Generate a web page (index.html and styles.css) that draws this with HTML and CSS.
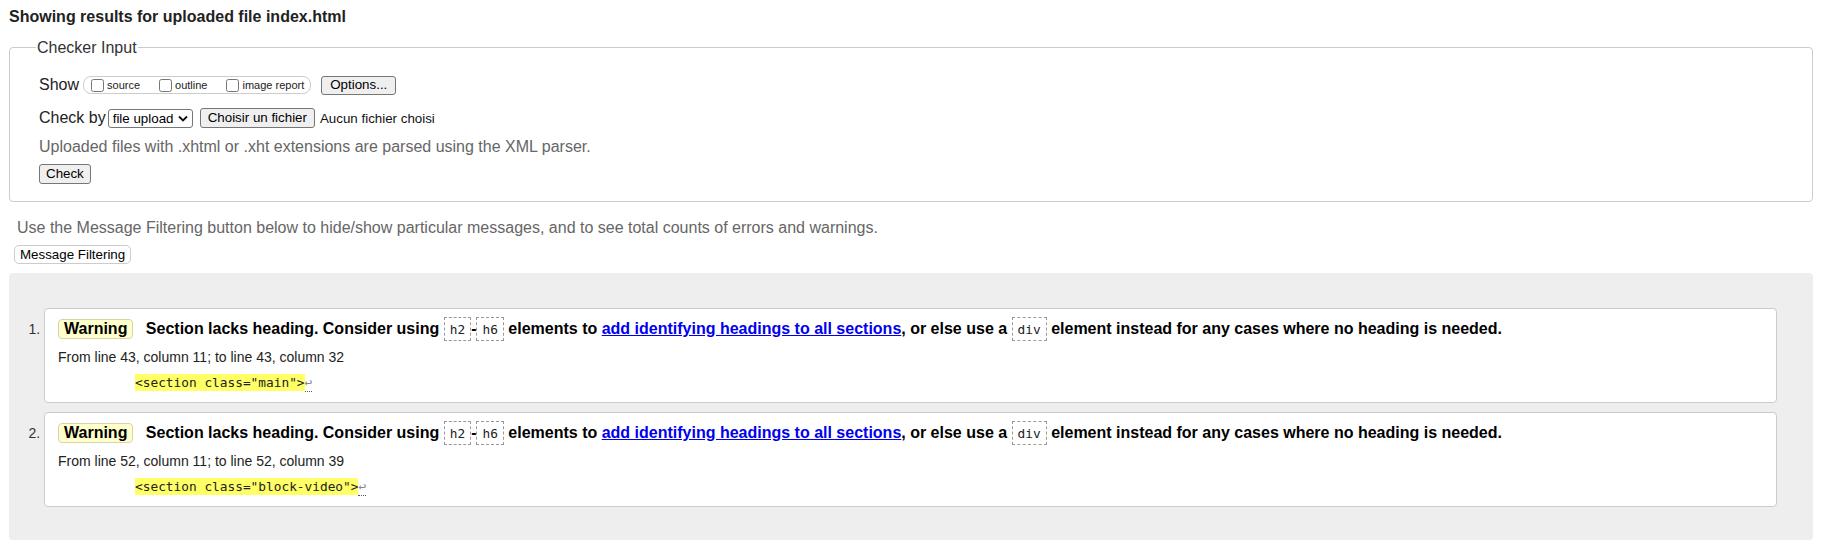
FILE: index.html
```html
<!DOCTYPE html>
<html lang="en">
<head>
<meta charset="utf-8">
<title>Showing results for uploaded file index.html - Nu Html Checker</title>
<link rel="stylesheet" href="styles.css">
</head>
<body>
<h2 class="results-title">Showing results for uploaded file index.html</h2>
<form class="checker" action="#">
  <fieldset class="checker-input">
    <legend class="checker-legend">Checker Input</legend>
    <div class="row row-show">
      <span class="row-label">Show</span>
      <span class="show-options">
        <label class="opt"><input type="checkbox" class="cb"><span>source</span></label>
        <label class="opt"><input type="checkbox" class="cb"><span>outline</span></label>
        <label class="opt"><input type="checkbox" class="cb"><span>image report</span></label>
      </span>
      <button type="button" class="btn btn-options">Options...</button>
    </div>
    <div class="row row-checkby">
      <span class="row-label">Check by</span>
      <span class="select-wrap">
        <select class="select"><option>file upload</option></select>
        <svg class="chevron" width="10" height="7" viewBox="0 0 10 7" aria-hidden="true"><path d="M1 1.5 L5 5.5 L9 1.5" fill="none" stroke="#111" stroke-width="1.9"/></svg>
      </span>
      <button type="button" class="btn btn-file">Choisir un fichier</button>
      <span class="file-name">Aucun fichier choisi</span>
    </div>
    <p class="hint">Uploaded files with .xhtml or .xht extensions are parsed using the XML parser.</p>
    <div class="row row-submit">
      <button type="button" class="btn btn-check">Check</button>
    </div>
  </fieldset>
</form>
<p class="filter-info">Use the Message Filtering button below to hide/show particular messages, and to see total counts of errors and warnings.</p>
<button type="button" class="btn-filter">Message Filtering</button>
<div class="results">
  <ol class="messages">
    <li class="msg">
      <p class="msg-title"><strong class="badge">Warning</strong> <span>Section lacks heading. Consider using <code class="tag">h2</code>-<code class="tag">h6</code> elements to <a class="msg-link" href="#">add identifying headings to all sections</a>, or else use a <code class="tag">div</code> element instead for any cases where no heading is needed.</span></p>
      <p class="location">From line 43, column 11; to line 43, column 32</p>
      <p class="extract"><code class="extract-code">          <b class="hl">&lt;section class="main"&gt;</b><span class="lf" title="Line break">↩</span></code></p>
    </li>
    <li class="msg">
      <p class="msg-title"><strong class="badge">Warning</strong> <span>Section lacks heading. Consider using <code class="tag">h2</code>-<code class="tag">h6</code> elements to <a class="msg-link" href="#">add identifying headings to all sections</a>, or else use a <code class="tag">div</code> element instead for any cases where no heading is needed.</span></p>
      <p class="location">From line 52, column 11; to line 52, column 39</p>
      <p class="extract"><code class="extract-code">          <b class="hl">&lt;section class="block-video"&gt;</b><span class="lf" title="Line break">↩</span></code></p>
    </li>
  </ol>
</div>
</body>
</html>
```

FILE: styles.css
```css
html, body {
  background: #fff;
}

body {
  margin: 0;
  padding: 0 11px 0 9px;
  font-family: "Liberation Sans", Arial, sans-serif;
  font-size: 16px;
  color: #222;
}

.results-title {
  margin: 8px 0 12px;
  font-size: 16px;
  line-height: 18px;
  font-weight: bold;
  color: #222;
}

.checker {
  margin: 0;
}

.checker-input {
  margin: 0;
  padding: 0 20px 17px 29px;
  border: 1px solid #ccc;
  border-radius: 4px;
  min-width: 0;
}

.checker-legend {
  font-size: 16px;
  line-height: 19px;
  padding: 0 1px;
  margin-left: -3px;
  color: #333;
}

.row {
  display: flex;
  align-items: center;
  height: 20px;
}

.row-show {
  margin-top: 18px;
}

.row-checkby {
  margin-top: 13px;
}

.row-submit {
  margin-top: 8px;
}

.row-label {
  font-size: 16px;
  line-height: 18px;
  color: #222;
}

.show-options {
  display: inline-flex;
  align-items: center;
  box-sizing: border-box;
  height: 18px;
  margin-left: 4px;
  padding: 0 6px 0 3px;
  border: 1px solid #ccc;
  border-radius: 8px;
}

.opt {
  display: inline-flex;
  align-items: center;
  font-size: 11px;
  line-height: 13px;
  color: #222;
  margin-right: 15px;
}

.opt:last-child {
  margin-right: 0;
}

.cb {
  width: 13px;
  height: 13px;
  margin: 0 3px 0 4px;
}

.btn {
  box-sizing: border-box;
  height: 20px;
  font-family: "Liberation Sans", Arial, sans-serif;
  font-size: 13.333px;
  line-height: 16px;
  color: #000;
  background: #efefef;
  border: 1px solid #767676;
  border-radius: 3px;
  padding: 0 6px;
}

.btn-options {
  height: 19px;
  margin-left: 10px;
  padding: 0 8px;
}

.btn-file {
  margin-left: 7px;
  padding: 0 7px;
}

.btn-check {
  padding: 0 6px;
}

.select-wrap {
  position: relative;
  display: inline-block;
  margin-left: 2px;
  height: 19px;
}

.select {
  appearance: none;
  -webkit-appearance: none;
  box-sizing: border-box;
  width: 85px;
  height: 19px;
  margin: 0;
  padding: 0 0 0 4px;
  font-family: "Liberation Sans", Arial, sans-serif;
  font-size: 13.333px;
  color: #000;
  background: #fff;
  border: 1px solid #767676;
  border-radius: 3px;
}

.chevron {
  position: absolute;
  right: 5px;
  top: 6px;
  pointer-events: none;
}

.file-name {
  margin-left: 5px;
  font-size: 13.333px;
  color: #111;
}

.hint {
  margin: 10px 0 0;
  font-size: 16px;
  line-height: 18px;
  color: #666;
}

.filter-info {
  margin: 17px 0 0;
  padding-left: 8px;
  font-size: 16px;
  line-height: 18px;
  color: #666;
}

.btn-filter {
  display: block;
  box-sizing: border-box;
  height: 19px;
  margin: 8px 0 0 5px;
  padding: 0 5px;
  font-family: "Liberation Sans", Arial, sans-serif;
  font-size: 13.333px;
  line-height: 16px;
  color: #000;
  background: #fff;
  border: 1px solid #ccc;
  border-radius: 5px;
}

.results {
  margin-top: 9px;
  padding: 35px 36px 33px 0;
  background: #eee;
  border-radius: 4px;
}

.messages {
  margin: 0;
  padding-left: 35px;
  list-style: decimal;
  font-size: 14px;
  color: #333;
}

.msg {
  background: #fff;
  border: 1px solid #ccc;
  border-radius: 4px;
  padding: 0 13px 10px 13px;
}

.msg + .msg {
  margin-top: 9px;
}

.msg-title {
  margin: 0;
  padding-top: 8px;
  font-size: 16px;
  line-height: 24px;
  font-weight: bold;
  color: #000;
  white-space: nowrap;
}

.badge {
  display: inline-block;
  margin-right: 8px;
  padding: 0 5px;
  line-height: 18px;
  background: #ffc;
  border: 1px solid #d8d3a8;
  border-radius: 4px;
  color: #000;
}

.tag {
  display: inline-block;
  vertical-align: top;
  box-sizing: border-box;
  height: 24px;
  padding: 1px 5px 0;
  font-family: "DejaVu Sans Mono", "Liberation Mono", monospace;
  font-size: 12.8px;
  font-weight: normal;
  line-height: 21px;
  color: #222;
  border: 1px dashed #999;
}

.msg-link {
  color: #00e;
  text-decoration: underline;
}

.location {
  margin: 8px 0 0;
  font-size: 14px;
  line-height: 16px;
  color: #222;
}

.extract {
  margin: 8px 0 0;
  line-height: 18px;
}

.extract-code {
  white-space: pre;
  font-family: "DejaVu Sans Mono", "Liberation Mono", monospace;
  font-size: 12.8px;
  color: #222;
}

.hl {
  font-weight: normal;
  background: #ff6;
  padding: 1.25px 0;
}

.lf {
  font-family: "DejaVu Sans Mono", monospace;
  color: #888;
  padding-bottom: 1.25px;
  border-bottom: 1px dotted #555;
}
```
